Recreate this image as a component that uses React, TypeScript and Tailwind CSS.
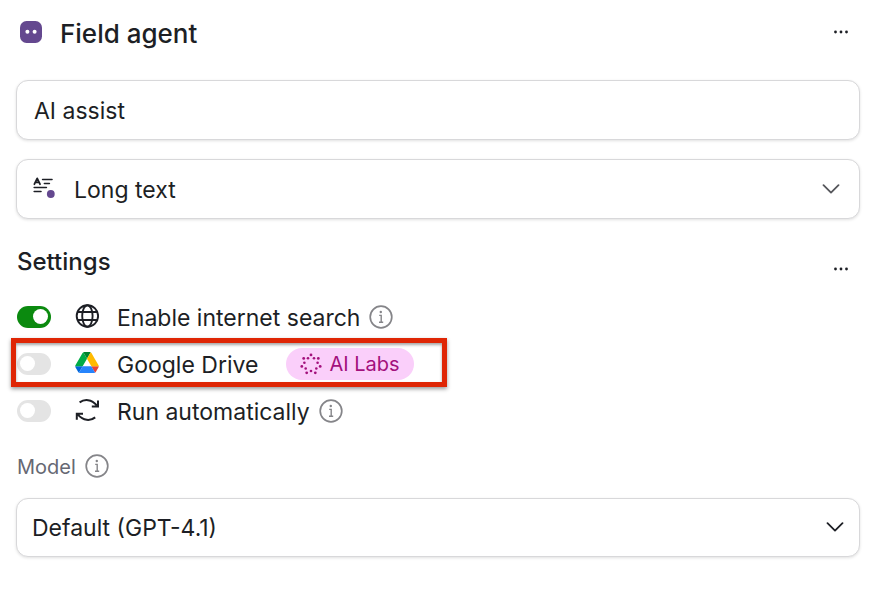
import { useState, type ReactNode } from 'react'

const fieldBox =
  'w-full appearance-none rounded-xl border border-[#d8d8da] bg-white pt-[2px] text-[23px] text-[#1d1f25] shadow-[0_1px_3px_rgba(0,0,0,0.12)] outline-none focus-visible:border-[#64488f]'

function AgentIcon() {
  return (
    <svg viewBox="0 0 22 22" className="size-[22px]" aria-hidden="true">
      <rect width="22" height="22" rx="6.5" fill="#64488f" />
      <circle cx="7.4" cy="10.8" r="2" fill="#fff" />
      <circle cx="14.6" cy="10.8" r="2" fill="#fff" />
    </svg>
  )
}

function MoreButton({ label }: { label: string }) {
  return (
    <button type="button" aria-label={label} className="flex h-6 w-6 cursor-pointer items-center justify-center">
      <svg viewBox="0 0 16 4" className="h-1 w-4" fill="#1d1f25" aria-hidden="true">
        <circle cx="2.5" cy="2" r="1.4" />
        <circle cx="8" cy="2" r="1.4" />
        <circle cx="13.5" cy="2" r="1.4" />
      </svg>
    </button>
  )
}

function Chevron({ className }: { className: string }) {
  return (
    <svg
      viewBox="0 0 18 10"
      className={className}
      fill="none"
      stroke="currentColor"
      strokeWidth="1.8"
      strokeLinecap="round"
      strokeLinejoin="round"
      aria-hidden="true"
    >
      <path d="M1.5 1.2 9 8.6l7.5-7.4" />
    </svg>
  )
}

function LongTextIcon() {
  return (
    <svg viewBox="0 0 22 22" className="pointer-events-none absolute top-[18px] left-[17px] size-[22px]" fill="none" aria-hidden="true">
      <g stroke="#1d1f25" strokeWidth="1.6" strokeLinecap="round" strokeLinejoin="round">
        <path d="M1.4 7.2 4.2 1.4 7 7.2M2.3 5.4h3.8" strokeWidth="1.8" />
        <path d="M9.6 2.5h9.4M11.4 6.5h5M1.2 10.5h12.2M1.2 14.5h6.8" />
      </g>
      <circle cx="17.8" cy="17" r="3.9" fill="#64488f" />
    </svg>
  )
}

function GlobeIcon() {
  return (
    <svg viewBox="0 0 24 24" className="size-6" fill="none" stroke="#1d1f25" strokeWidth="1.9" aria-hidden="true">
      <circle cx="12.4" cy="12" r="10.7" />
      <ellipse cx="12.4" cy="12" rx="5.2" ry="10.7" />
      <path d="M2.6 8h19.6M2.6 16h19.6" />
    </svg>
  )
}

function DriveIcon() {
  return (
    <svg viewBox="0 0 87.3 78" className="h-[21px] w-6" aria-hidden="true">
      <path d="m6.6 66.85 3.85 6.65c.8 1.4 1.95 2.5 3.3 3.3l13.75-23.8h-27.5c0 1.55.4 3.1 1.2 4.5z" fill="#0066da" />
      <path d="m43.65 25-13.75-23.8c-1.35.8-2.5 1.9-3.3 3.3l-25.4 44a9.06 9.06 0 0 0-1.2 4.5h27.5z" fill="#00ac47" />
      <path d="m73.55 76.8c1.35-.8 2.5-1.9 3.3-3.3l1.6-2.75 7.65-13.25c.8-1.4 1.2-2.95 1.2-4.5h-27.502l5.852 11.5z" fill="#ea4335" />
      <path d="m43.65 25 13.75-23.8c-1.35-.8-2.9-1.2-4.5-1.2h-18.5c-1.6 0-3.15.45-4.5 1.2z" fill="#00832d" />
      <path d="m59.8 53h-32.3l-13.75 23.8c1.35.8 2.9 1.2 4.5 1.2h50.8c1.6 0 3.15-.45 4.5-1.2z" fill="#2684fc" />
      <path d="m73.4 26.5-12.7-22c-.8-1.4-1.95-2.5-3.3-3.3l-13.75 23.8 16.15 28h27.45c0-1.55-.4-3.1-1.2-4.5z" fill="#ffba00" />
    </svg>
  )
}

function RefreshIcon() {
  return (
    <svg viewBox="0 0 24 24" className="size-6" fill="none" stroke="#1d1f25" strokeWidth="2" aria-hidden="true">
      <path d="M4.6 4.4C9.4.8 16.6 1 21.8 7.4M23 2.4v6h-6.2" />
      <path d="M20.2 19.4C15.4 23.2 8.2 23 3 16.6M1.8 21.8v-6H8" />
    </svg>
  )
}

function InfoButton({ label }: { label: string }) {
  return (
    <button type="button" aria-label={label} className="cursor-pointer">
      <svg viewBox="0 0 24 24" className="block size-6" fill="none" stroke="#858589" aria-hidden="true">
        <circle cx="12" cy="12" r="10.8" strokeWidth="1.7" />
        <path d="M10.2 10.4h2v6.8M10 17.3h4.2" strokeWidth="1.4" />
        <circle cx="11.8" cy="7" r="1.2" fill="#858589" stroke="none" />
      </svg>
    </button>
  )
}

function LabsIcon() {
  return (
    <svg viewBox="0 0 22 22" className="size-[22px]" fill="#a3107c" aria-hidden="true">
      <circle cx="11" cy="1.9" r="1.4" />
      <circle cx="18.3" cy="5.4" r="1.4" />
      <circle cx="20.2" cy="13.4" r="1.4" />
      <circle cx="15.3" cy="19.8" r="1.4" />
      <circle cx="6.7" cy="19.8" r="1.4" />
      <circle cx="1.8" cy="13.4" r="1.4" />
      <circle cx="3.7" cy="5.4" r="1.4" />
      <circle cx="14" cy="5.2" r="1.3" />
      <circle cx="17.6" cy="9.8" r="1.3" />
      <circle cx="16.3" cy="15.5" r="1.3" />
      <circle cx="11" cy="18" r="1.3" />
      <circle cx="5.7" cy="15.5" r="1.3" />
      <circle cx="4.4" cy="9.8" r="1.3" />
      <circle cx="8" cy="5.2" r="1.3" />
    </svg>
  )
}

type SettingRowProps = {
  id: string
  label: string
  icon: ReactNode
  defaultChecked?: boolean
  children?: ReactNode
}

function SettingRow({ id, label, icon, defaultChecked = false, children }: SettingRowProps) {
  const [checked, setChecked] = useState(defaultChecked)

  return (
    <li className="relative flex h-[47px] items-center pl-px">
      <input
        id={id}
        type="checkbox"
        role="switch"
        checked={checked}
        onChange={(e) => setChecked(e.target.checked)}
        className="flex h-[22px] w-[34px] shrink-0 cursor-pointer appearance-none items-center rounded-full bg-[#e4e4e4] px-[3px] before:size-[15px] before:rounded-full before:bg-white checked:justify-end checked:bg-[#0b8a0f]"
      />
      <span className="mr-[18px] ml-6 flex w-6 shrink-0 justify-center pb-[2px]">{icon}</span>
      <label htmlFor={id} className="cursor-pointer pt-[3px]">
        {label}
      </label>
      {children}
    </li>
  )
}

export default function App() {
  const [name, setName] = useState('AI assist')

  return (
    <main className="min-h-screen bg-white px-4 font-['Inter',sans-serif] text-[23px] text-[#1d1f25]">
      <header className="mb-4 flex h-16 items-center justify-between pr-[7px] pl-1">
        <div className="flex items-center gap-[18px]">
          <AgentIcon />
          <h1 className="pt-[2px] text-[26px] font-medium">Field agent</h1>
        </div>
        <MoreButton label="Agent options" />
      </header>

      <div className="flex flex-col gap-[19px]">
        <input
          aria-label="Field name"
          value={name}
          onChange={(e) => setName(e.target.value)}
          className={`${fieldBox} h-[60px] px-[17px]`}
        />
        <div className="relative">
          <select aria-label="Field type" className={`${fieldBox} h-[60px] pr-12 pl-[57px]`}>
            <option>Long text</option>
          </select>
          <LongTextIcon />
          <Chevron className="pointer-events-none absolute top-[25px] right-5 h-[10px] w-[18px] text-[#55565b]" />
        </div>
      </div>

      <section>
        <div className="mt-[19px] mb-[7px] flex h-12 items-center justify-between pr-[7px] pl-px">
          <h2 className="text-2xl font-medium">Settings</h2>
          <div className="pt-[14px]">
            <MoreButton label="Settings options" />
          </div>
        </div>

        <ul>
          <SettingRow id="internet-search" label="Enable internet search" icon={<GlobeIcon />} defaultChecked>
            <span className="ml-[9px] flex">
              <InfoButton label="About internet search" />
            </span>
          </SettingRow>
          <SettingRow id="google-drive" label="Google Drive" icon={<DriveIcon />}>
            <span className="ml-7 flex h-8 items-center gap-[7px] rounded-full bg-[#facffa] px-[14px] text-xl text-[#a3107c]">
              <LabsIcon />
              AI Labs
            </span>
            {/* Highlight drawn around the Drive setting */}
            <div className="pointer-events-none absolute -top-[2px] -left-[5px] h-[49px] w-[436px] border-5 border-[#df2605] shadow-[0_2px_4px_rgba(0,0,0,0.4),inset_0_2px_3px_rgba(0,0,0,0.35)]" />
          </SettingRow>
          <SettingRow id="run-automatically" label="Run automatically" icon={<RefreshIcon />}>
            <span className="ml-[9px] flex">
              <InfoButton label="About automatic runs" />
            </span>
          </SettingRow>
        </ul>
      </section>

      <section className="pb-8">
        <div className="flex h-16 items-center gap-[9px] pl-px">
          <label htmlFor="model" className="pt-[2px] text-xl text-[#666873]">
            Model
          </label>
          <InfoButton label="About models" />
        </div>
        <div className="relative">
          <select id="model" className={`${fieldBox} h-[59px] pr-12 pl-[15px]`}>
            <option>Default (GPT-4.1)</option>
          </select>
          <Chevron className="pointer-events-none absolute top-6 right-4 h-[10px] w-[18px]" />
        </div>
      </section>
    </main>
  )
}
